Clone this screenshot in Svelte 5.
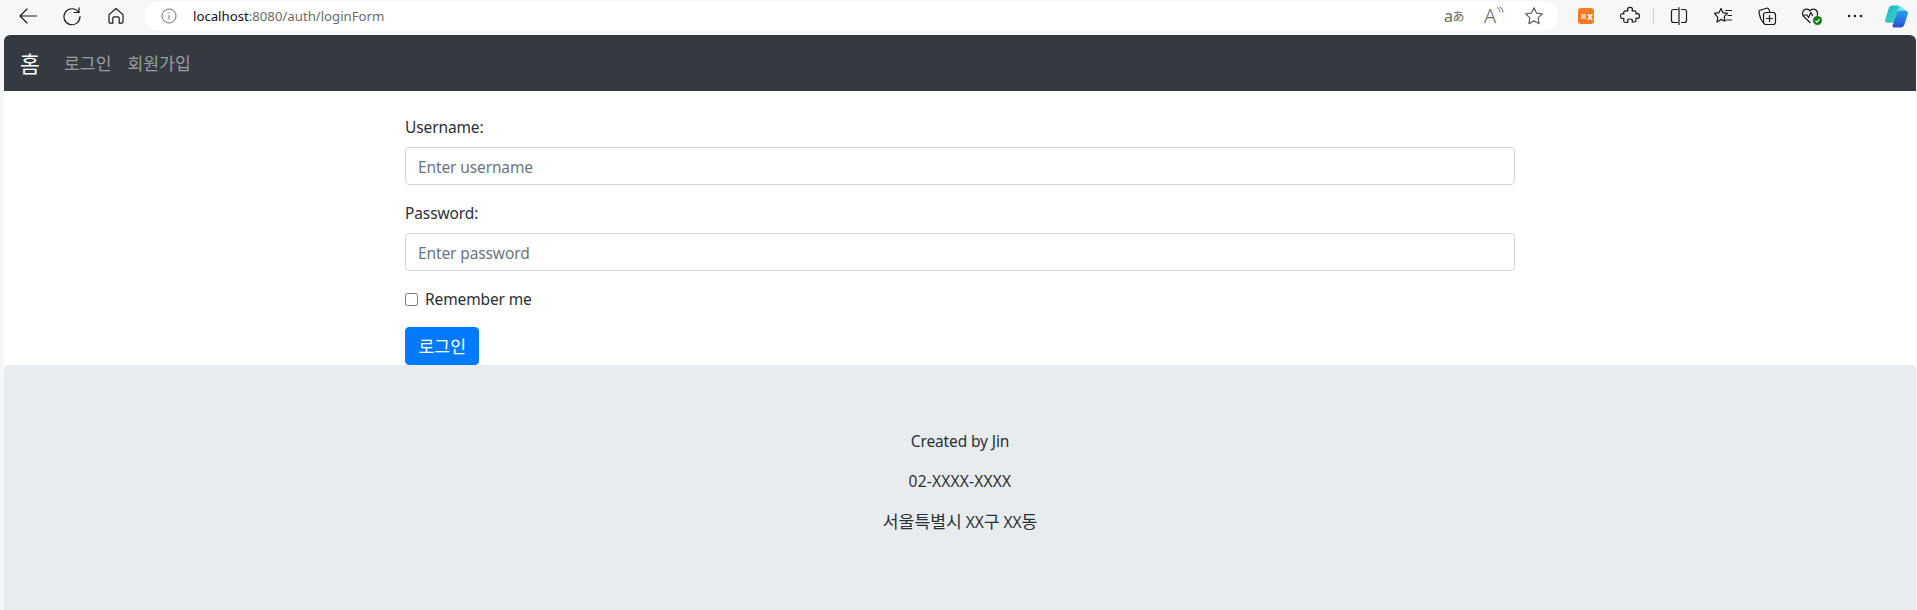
<script lang="ts">
	let username = $state('');
	let password = $state('');
	let remember = $state(false);
</script>

<div class="window">
	<header class="chrome">
		<div class="cell">
			<svg viewBox="0 0 20 20" class="ico"><path d="M18.500 10H2M9 3l-7 7 7 7" /></svg>
		</div>
		<div class="cell">
			<svg viewBox="0 0 20 20" class="ico"><path d="M16.600 6.200A8 8 0 1 0 18 10.500M17 1.800v4.700h-4.700" /></svg>
		</div>
		<div class="cell">
			<svg viewBox="0 0 20 20" class="ico"><path d="M3 8.600 10 2.500l7 6.100v7.200a1.400 1.400 0 0 1-1.400 1.400h-2.400v-5a1.300 1.300 0 0 0-1.300-1.300H8.100a1.300 1.300 0 0 0-1.300 1.300v5H4.400A1.400 1.400 0 0 1 3 15.800z" /></svg>
		</div>

		<div class="address">
			<svg viewBox="0 0 16 16" class="info"><circle cx="8" cy="8" r="7" /><path d="M8 7v4.500M8 4.200v1.200" /></svg>
			<span class="url"><b>localhost</b>:8080/auth/loginForm</span>
			<span class="spacer"></span>
			<span class="addr-cell translate">a<span class="kana">あ</span></span>
			<span class="addr-cell read">A<svg viewBox="0 0 8 10" class="waves"><path d="M1 1.500c2 .8 3 2.500 3 4.500M3.500 .8c2.200 1.200 3.500 3.200 3.500 5.700" /></svg></span>
			<span class="addr-cell">
				<svg viewBox="0 0 20 20" class="ico star"><path d="m10 1.800 2.500 5.300 5.800.8-4.200 4 1 5.800-5.100-2.800-5.100 2.800 1-5.800-4.200-4 5.800-.8z" /></svg>
			</span>
		</div>

		<div class="cell">
			<span class="ex"><i></i>x</span>
		</div>
		<div class="cell">
			<svg viewBox="0 0 20 20" class="ico"><path d="M8 4.800C7 2.500 8 1.300 10 1.300s3 1.200 2 3.500h2.300a1.700 1.700 0 0 1 1.700 1.700V8c2.300-1 3.500 0 3.500 2s-1.200 3-3.500 2v2.300a1.700 1.700 0 0 1-1.700 1.700h-2.100c.8-2-.4-3-2.200-3s-3 1-2.200 3v.5H5.500A1.700 1.700 0 0 1 3.800 15v-2.800C1.700 13 .5 12 .5 10s1.200-3 3.300-2V6.500a1.700 1.700 0 0 1 1.700-1.700z" /></svg>
		</div>
		<div class="divider"></div>
		<div class="cell">
			<svg viewBox="0 0 20 20" class="ico"><path d="M8.500 3.500h-4a2 2 0 0 0-2 2v9a2 2 0 0 0 2 2h4M10 1.500v17M12.500 3.500h3a2 2 0 0 1 2 2v9a2 2 0 0 1-2 2h-3" /></svg>
		</div>
		<div class="cell">
			<svg viewBox="0 0 20 20" class="ico"><path d="m8 2.500 2 4.200 4.500.7-3.300 3.200.8 4.500L8 13.400l-4 2.700.8-4.700L1.500 7.400 6 6.700zM13 4.500h5.500M15 9.500h3.500M13.500 14h5" /></svg>
		</div>
		<div class="cell">
			<svg viewBox="0 0 20 20" class="ico"><path d="M6.500 17 3.700 13 2 6.500c-.3-1 .2-2 1.300-2.300l6.200-2c1-.3 2 .2 2.500 1.200l.9 2.600" /><rect x="6.500" y="6.500" width="12" height="12" rx="2.500" /><path d="M12.500 9.500v6M9.500 12.500h6" /></svg>
		</div>
		<div class="cell">
			<svg viewBox="0 0 20 20" class="ico heart"><path d="M9 16.500 3 10.800C1 8.800 1 6 2.800 4.300 4.600 2.600 7.500 2.800 9 4.800c1.500-2 4.400-2.200 6.200-.5 1.400 1.300 1.700 3.300 1 5M1.800 9H6l1.500 2.500L10 6.500l1.500 3" /></svg>
			<svg viewBox="0 0 10 10" class="badge"><circle cx="5" cy="5" r="5" /><path d="M2.700 5.200 4.300 6.800 7.400 3.500" /></svg>
		</div>
		<div class="cell">
			<svg viewBox="0 0 20 20" class="dots"><circle cx="3.500" cy="10" r="1.400" /><circle cx="10" cy="10" r="1.400" /><circle cx="16.500" cy="10" r="1.400" /></svg>
		</div>
		<div class="cell last">
			<svg viewBox="0 0 24 24" class="copilot">
				<defs>
					<linearGradient id="cpa" x1="0" y1="0" x2="1" y2="1"><stop offset="0" stop-color="#1fb6e8" /><stop offset="1" stop-color="#3ed6a0" /></linearGradient>
					<linearGradient id="cpb" x1="0" y1="0" x2="0" y2="1"><stop offset="0" stop-color="#27a3ee" /><stop offset="1" stop-color="#2a4fd8" /></linearGradient>
				</defs>
				<path fill="url(#cpa)" d="M8 1.500h5.500c1.200 0 1.900.7 1.500 1.800L11 15.500c-.6 1.600-1.500 2.500-3.200 2.500H3.500C1.500 18 .6 16.600 1.200 14.800L4.500 4.200C5 2.500 6.200 1.500 8 1.500z" />
				<path fill="url(#cpb)" d="M16 6h3.500c2.500 0 3.900 1.500 3.300 3.500l-3.200 10.300c-.6 1.900-1.900 2.700-3.600 2.700H9.500c-1.200 0-1.700-.8-1.300-1.800L12.500 9c.6-1.800 1.800-3 3.500-3z" />
				<path fill="#7be3f0" d="M15 2.500c1.500 0 3.600.3 4.500 3.500H16c-1.700 0-2.900 1-3.500 2.500z" />
			</svg>
		</div>
	</header>

	<main class="page">
		<nav class="navbar">
			<a class="brand" href="#home">홈</a>
			<a class="nav-link ko" href="#login">로그인</a>
			<a class="nav-link ko" href="#join">회원가입</a>
		</nav>

		<form class="container" onsubmit={(e) => e.preventDefault()}>
			<div class="form-group">
				<label for="username">Username:</label>
				<input id="username" type="text" placeholder="Enter username" bind:value={username} />
			</div>
			<div class="form-group">
				<label for="password">Password:</label>
				<input id="password" type="password" placeholder="Enter password" bind:value={password} />
			</div>
			<div class="form-check">
				<label><input type="checkbox" bind:checked={remember} /> Remember me</label>
			</div>
			<button type="submit" class="btn ko">로그인</button>
		</form>

		<footer class="footer">
			<p>Created by Jin</p>
			<p class="phone">02-XXXX-XXXX</p>
			<p><span class="ko">서울특별시</span> XX<span class="ko">구</span> XX<span class="ko">동</span></p>
		</footer>
	</main>
</div>

<style>
	:global(body) {
		margin: 0;
		background: #f7f7f7;
	}

	.window {
		height: 610px;
		width: 1917px;
		overflow: hidden;
		display: flex;
		flex-direction: column;
		background: #f7f7f7;
		font-family: 'Noto Sans', 'Noto Sans CJK KR', sans-serif;
		font-size: 15.500px;
		letter-spacing: -0.120px;
		line-height: 24px;
		color: #2b3035;
	}

	.ko {
		font-size: 17.200px;
		font-family: 'Noto Sans CJK KR', sans-serif;
		letter-spacing: 0;
	}

	.phone {
		letter-spacing: 0.200px;
	}

	.chrome {
		height: 35px;
		flex: none;
		display: flex;
		align-items: center;
		padding: 0 0 3px 6px;
		box-sizing: border-box;
		letter-spacing: 0;
	}

	.cell {
		position: relative;
		width: 44px;
		height: 32px;
		flex: none;
		display: flex;
		align-items: center;
		justify-content: center;
	}

	.cell.last {
		width: 39px;
	}

	.ico {
		width: 20px;
		height: 20px;
		fill: none;
		stroke: #1a1a1a;
		stroke-width: 1.200;
		stroke-linejoin: round;
		stroke-linecap: round;
	}

	.address {
		flex: none;
		width: 1415px;
		height: 30px;
		margin: 0 5px 0 6px;
		background: #fff;
		border-radius: 15px;
		display: flex;
		align-items: center;
		padding: 0 5px 0 17px;
		box-sizing: border-box;
		box-shadow: 0 0 1px rgba(0, 0, 0, 0.06);
	}

	.info {
		width: 16px;
		height: 16px;
		fill: none;
		stroke: #6f6f6f;
		stroke-width: 1;
		flex: none;
	}

	.url {
		margin-left: 16px;
		font-size: 13.200px;
		color: #6a6a6a;
		white-space: nowrap;
	}

	.url b {
		font-weight: 400;
		color: #111;
	}

	.spacer {
		flex: 1;
	}

	.addr-cell {
		position: relative;
		width: 40px;
		height: 30px;
		display: flex;
		align-items: center;
		justify-content: center;
		color: #6a6a6a;
		font-size: 16px;
	}

	.translate {
		letter-spacing: -0.500px;
	}

	.kana {
		font-family: 'Noto Sans CJK JP', sans-serif;
		font-size: 12px;
	}

	.read {
		font-size: 20px;
		font-weight: 300;
	}

	.waves {
		width: 8px;
		height: 10px;
		margin-bottom: 10px;
		fill: none;
		stroke: #6a6a6a;
		stroke-width: 1;
	}

	.star {
		stroke: #5f5f5f;
	}

	.ex {
		width: 16px;
		height: 16px;
		border-radius: 3px;
		background: #f47a2a;
		color: #fff;
		font-size: 10px;
		font-weight: 700;
		line-height: 16px;
		display: flex;
		align-items: center;
		justify-content: flex-end;
		padding-right: 1px;
		box-sizing: border-box;
	}

	.ex i {
		width: 5px;
		height: 5px;
		margin-right: 1px;
		background: #f9c5a0;
	}

	.divider {
		flex: none;
		width: 1px;
		height: 16px;
		margin: 0 3px 0 1px;
		background: #cfcfcf;
	}

	.badge {
		position: absolute;
		left: 24px;
		top: 16px;
		width: 9px;
		height: 9px;
	}

	.badge circle {
		fill: #107c10;
	}

	.badge path {
		fill: none;
		stroke: #fff;
		stroke-width: 1.300;
	}

	.dots {
		width: 18px;
		height: 18px;
		fill: #1a1a1a;
	}

	.copilot {
		width: 25px;
		height: 25px;
	}

	.page {
		margin: 0 1px 0 4px;
		flex: 1;
		background: #fff;
		border-radius: 6px 6px 0 0;
		overflow: hidden;
	}

	.navbar {
		height: 56px;
		display: flex;
		align-items: center;
		padding: 8px 16px;
		box-sizing: border-box;
		background: #343a40;
	}

	a {
		text-decoration: none;
	}

	.brand {
		font-family: 'Noto Sans CJK KR', sans-serif;
		font-size: 21.500px;
		width: 20px;
		color: #fff;
		margin-right: 16px;
	}

	.nav-link {
		padding: 8px;
		color: rgba(255, 255, 255, 0.5);
	}

	.container {
		width: 1110px;
		margin: 0 auto;
		padding-top: 24px;
	}

	.form-group {
		margin-bottom: 16px;
	}

	.form-group label {
		display: block;
		margin-bottom: 8px;
	}

	.form-group input {
		display: block;
		width: 100%;
		height: 38px;
		box-sizing: border-box;
		padding: 7px 12px 5px;
		font: inherit;
		letter-spacing: inherit;
		color: #495057;
		background: #fff;
		border: 1px solid #ced4da;
		border-radius: 4px;
	}

	.form-group input::placeholder {
		color: #6c757d;
		opacity: 1;
	}

	.form-check {
		margin-bottom: 16px;
		padding-left: 20px;
	}

	.form-check label {
		display: block;
		position: relative;
	}

	.form-check input {
		position: absolute;
		left: -20px;
		top: 3.800px;
		margin: 2px 0 0;
	}

	.btn {
		display: block;
		height: 38px;
		padding: 6px 12.500px;
		line-height: 24px;
		color: #fff;
		background: #007bff;
		border: 1px solid #007bff;
		border-radius: 4px;
		box-sizing: border-box;
	}

	.footer {
		height: 245px;
		background: #e9ecef;
		border-radius: 4.800px 4.800px 0 0;
		padding-top: 64px;
		box-sizing: border-box;
		text-align: center;
	}

	.footer p {
		margin: 0 0 16px;
		height: 24px;
	}
</style>
